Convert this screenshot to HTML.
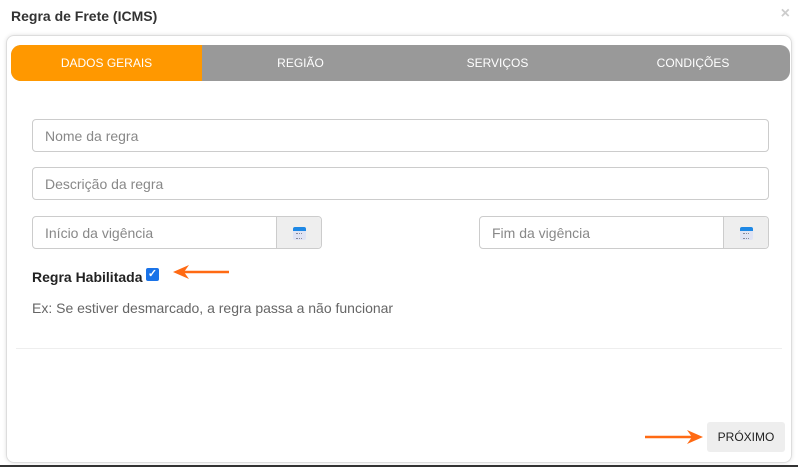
<!DOCTYPE html>
<html><head><meta charset="utf-8"><style>
*{box-sizing:border-box;margin:0;padding:0}
body{width:798px;height:467px;background:#fff;font-family:"Liberation Sans",sans-serif;position:relative;overflow:hidden}
.abs{position:absolute}
.title{left:11px;top:8px;font-size:14px;font-weight:bold;color:#333}
.x{right:8px;top:5px;color:#ccc;font-size:16px;font-weight:bold}
.card{left:6px;top:35px;width:786px;height:428px;border:1px solid #ddd;border-radius:8px;box-shadow:0 0 4px rgba(0,0,0,.12)}
.tabs{left:11px;top:45px;width:779px;height:36px;border-radius:10px;background:#999;overflow:hidden;display:flex}
.tabs div{width:25%;color:#fff;font-size:12px;text-align:center;line-height:36px}
.tabs .on{background:#ff9800;width:191px}
.inp{border:1px solid #ccc;border-radius:4px;height:33px;font-size:14px;color:#888;padding-left:12px;line-height:32px;background:#fff}
.btn{background:#eee;border-left:1px solid #ccc;position:absolute;right:0;top:0;width:45px;height:31px;border-radius:0 4px 4px 0}
.cal{position:absolute;left:16px;top:10px;width:13px;height:13px;background:#dfe3f3;border-top:4px solid #1e88e5;border-radius:2px;box-sizing:border-box}
.cal:after{content:"";position:absolute;left:3px;top:2px;width:6px;height:4px;border-top:1px dotted #889;border-bottom:1px dotted #889}
.lbl{left:32px;top:269px;font-size:14px;font-weight:bold;color:#222}
.chk{left:146px;top:268px;width:13px;height:13px;background:#1a73e8;border-radius:2px;color:#fff;font-size:11px;font-weight:bold;line-height:13px;text-align:center}
.help{left:32px;top:300px;font-size:14px;color:#666}
.div{left:16px;top:348px;width:766px;height:1px;background:#eee}
.prox{left:707px;top:422px;width:78px;height:30px;background:#eee;border-radius:3px;font-size:12px;color:#222;text-align:center;line-height:30px}
</style></head><body>
<div class="abs title">Regra de Frete (ICMS)</div>
<div class="abs x">×</div>
<div class="abs card"></div>
<div class="abs tabs"><div class="on">DADOS GERAIS</div><div style="width:197px">REGIÃO</div><div style="width:197px">SERVIÇOS</div><div style="width:194px">CONDIÇÕES</div></div>
<div class="abs inp" style="left:32px;top:119px;width:737px">Nome da regra</div>
<div class="abs inp" style="left:32px;top:167px;width:737px">Descrição da regra</div>
<div class="abs inp" style="left:32px;top:216px;width:290px">Início da vigência<div class="btn"><div class="cal"></div></div></div>
<div class="abs inp" style="left:479px;top:216px;width:290px">Fim da vigência<div class="btn"><div class="cal"></div></div></div>
<div class="abs lbl">Regra Habilitada</div>
<div class="abs chk">✓</div>
<svg class="abs" style="left:172px;top:264px" width="60" height="16"><line x1="8" y1="8" x2="57" y2="8" stroke="#ff6a13" stroke-width="2.5"/><path d="M1 8 L17 1 L12 8 L17 15Z" fill="#ff6a13"/></svg>
<div class="abs help">Ex: Se estiver desmarcado, a regra passa a não funcionar</div>
<div class="abs div"></div>
<svg class="abs" style="left:643px;top:429px" width="62" height="16"><line x1="2" y1="8" x2="50" y2="8" stroke="#ff6a13" stroke-width="2.5"/><path d="M60 8 L44 1 L49 8 L44 15Z" fill="#ff6a13"/></svg>
<div class="abs prox">PRÓXIMO</div>
<div class="abs" style="left:0;top:465px;width:798px;height:2px;background:#333"></div>
</body></html>
